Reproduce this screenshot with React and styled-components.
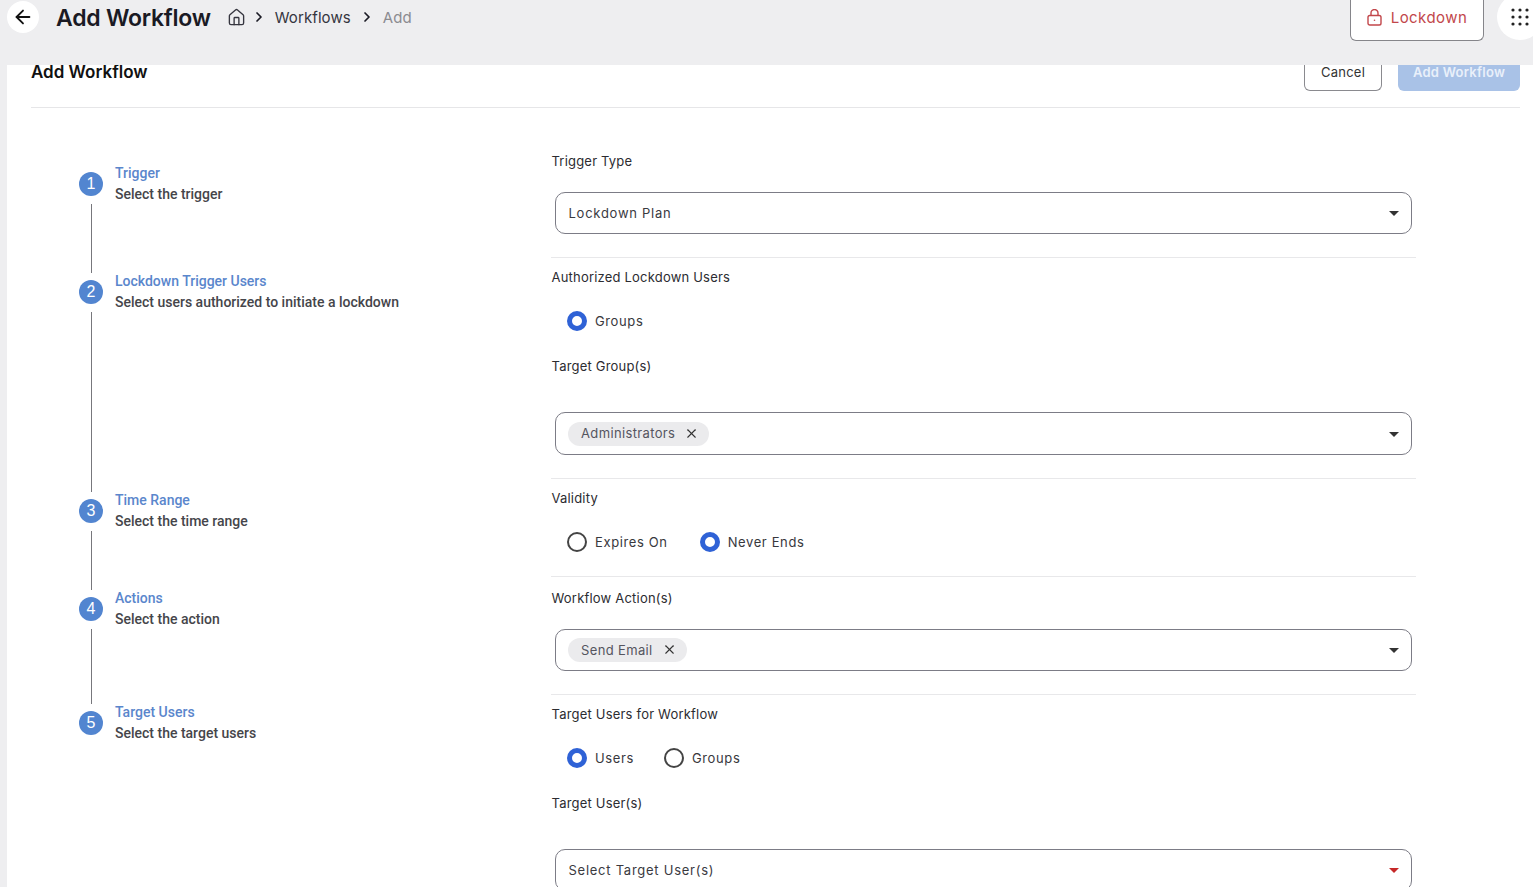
import React from 'react';
import styled, { createGlobalStyle } from 'styled-components';
import { Home, ArrowLeft, ChevronRight, X } from 'lucide-react';

const Global = createGlobalStyle`
  html, body { margin: 0; padding: 0; height: 887px; overflow: hidden; background: #eeeef0; }
  * { box-sizing: border-box; }
  body { font-family: Inter, "Liberation Sans", sans-serif; color: #1f1f24; }
`;

const Page = styled.div`
  width: 1533px; height: 887px; overflow: hidden; display: flex; flex-direction: column;
`;
const Header = styled.header`
  height: 65px; flex: none; display: flex; align-items: flex-start; padding-left: 7px; background: #eeeef0; position: relative;
`;
const BackBtn = styled.div`
  width: 32px; height: 32px; margin-top: 1px; border-radius: 50%; background: #fff; display: flex; align-items: center; justify-content: center; color: #111;
`;
const Title = styled.h1`
  margin: 3px 0 0 17px; font-size: 23px; line-height: 30px; font-weight: 600; letter-spacing: -.25px; color: #1a1a24; white-space: nowrap;
`;
const Crumbs = styled.nav`
  display: flex; align-items: center; height: 20px; margin: 7px 0 0 16px; font-size: 15px; letter-spacing: .1px; color: #35353f;
`;
const Crumb = styled.span`
  color: ${p => p.$muted ? '#8b8b90' : '#35353f'};
  margin-left: ${p => p.$ml}px;
`;
const CrumbSep = styled(ChevronRight)`
  margin-left: ${p => p.$ml}px;
  color: #1a1a24;
`;
const Right = styled.div`
  position: absolute; right: 0; top: 0; display: flex; align-items: flex-start;
`;
const LockBtn = styled.div`
  width: 134px; height: 41px; border: 1px solid #85858a; border-top: 0; border-radius: 0 0 6px 6px; background: #fff;
  display: flex; align-items: center; justify-content: center; gap: 9px; color: #c2474b; font-size: 15px; letter-spacing: .45px; padding-bottom: 5px;
`;
const AppsBtn = styled.div`
  width: 46px; height: 46px; margin: -6px -10px 0 13px; border-radius: 50%; background: #fff; display: flex; align-items: center; padding-left: 14px;
`;
const Card = styled.main`
  flex: 1; margin-left: 7px; background: #fff; padding: 0 13px 0 24px; min-height: 0;
`;
const CardHead = styled.div`
  height: 43px; border-bottom: 1px solid #e6e6e8; display: flex; align-items: flex-start; justify-content: space-between;
`;
const CardTitle = styled.h2`
  margin: 0; font-size: 17px; line-height: 14px; font-weight: 600; color: #111;
`;
const Actions = styled.div`
  display: flex; gap: 16px;
`;
const Btn = styled.div`
  height: 26px; padding-bottom: 12px; border-radius: 0 0 6px 6px; font-size: 13px; letter-spacing: .25px; display: flex; align-items: center; justify-content: center;
  width: ${p => p.$w}px;
  ${p => p.$primary ? 'background:#a9c2e7;color:#e9f0fa;font-weight:600;' : 'background:#fff;border:1px solid #8a8a8f;border-top:0;color:#333;'}
`;
const Body = styled.div`
  display: flex; align-items: flex-start;
`;
const Steps = styled.ol`
  list-style: none; margin: 0; padding: 57px 0 0 48px; width: 520px; flex: none;
`;
const Step = styled.li`
  display: flex; gap: 12px; height: ${p => p.$h}px;
`;
const Track = styled.div`
  width: 24px; flex: none; display: flex; flex-direction: column; align-items: center; padding-top: 7px;
`;
const Dot = styled.div`
  width: 24px; height: 24px; flex: none; border-radius: 50%; background: #5285d0; color: #fff; font-size: 16px; display: flex; align-items: center; justify-content: center; font-family: "Liberation Sans", sans-serif;
`;
const Line = styled.div`
  width: 1px; flex: 1; margin-top: 8px; background: #77777c;
`;
const StepText = styled.div`
  font-family: Roboto, sans-serif; font-size: 14px; line-height: 21px; font-weight: 500; margin-top: -2px;
`;
const StepName = styled.div`color: #5a86cc;`;
const StepDesc = styled.div`color: #45454a;`;
const Form = styled.div`
  width: 865px; flex: none;
`;
const Section = styled.section`
  border-bottom: ${p => p.$last ? '0' : '1px solid #e8e8ea'};
  height: ${p => p.$h}px; padding-top: ${p => p.$pt}px;
`;
const Label = styled.div`
  font-size: 13px; line-height: 20px; letter-spacing: .2px; padding-left: .5px; color: #2c2c31; margin-top: ${p => p.$mt || 0}px;
`;
const Select = styled.div`
  width: 857px; height: ${p => p.$h || 42}px; margin: ${p => p.$mt}px 0 0 4px; border: 1px solid #7c7c86; border-radius: 10px;
  display: flex; align-items: center; padding: 0 12.5px; position: relative; font-size: 13px; letter-spacing: .74px; color: #3a3a3f;
`;
const Caret = styled.i`
  position: absolute; right: 12px; top: 50%; margin-top: -2px; border: 5px solid transparent; border-top-color: ${p => p.$red ? '#c62828' : '#333'}; border-bottom: 0;
`;
const Chip = styled.span`
  height: 24px; border-radius: 12px; background: #ebebed; margin-left: -.5px; padding: 0 10px 1px 13px; display: inline-flex; align-items: center; gap: 9px; color: #55555f; font-size: 13px; letter-spacing: .36px;
`;
const Radios = styled.div`
  display: flex; gap: ${p => p.$gap || 32}px; margin: ${p => p.$mt}px 0 0 16px;
`;
const Radio = styled.label`
  display: flex; align-items: center; gap: 8px; font-size: 13px; letter-spacing: .62px; color: #38383d; height: 22px;
`;
const Circle = styled.span`
  width: 20px; height: 20px; border-radius: 50%; background: #fff;
  border: ${p => p.$on ? '5.5px solid #2f62d6' : '2px solid #444'};
`;

const Apps = () => (
  <svg width="18" height="18" viewBox="0 0 18 18" fill="#222">
    {[2, 9, 16].flatMap(y => [2, 9, 16].map(x => <circle key={`${x}${y}`} cx={x} cy={y} r="1.6" />))}
  </svg>
);

const LockIcon = () => (
  <svg width="15" height="17" viewBox="0 0 15 17" fill="none" stroke="currentColor" strokeWidth="1.4">
    <rect x="1" y="6.5" width="13" height="9.5" rx="1.8" />
    <path d="M4 6.5V4a3.5 3.5 0 0 1 7 0v2.5" />
    <circle cx="7.5" cy="11.2" r=".8" fill="currentColor" stroke="none" />
  </svg>
);

const steps = [
  ['1', 'Trigger', 'Select the trigger', 108],
  ['2', 'Lockdown Trigger Users', 'Select users authorized to initiate a lockdown', 219],
  ['3', 'Time Range', 'Select the time range', 98],
  ['4', 'Actions', 'Select the action', 114],
  ['5', 'Target Users', 'Select the target users', 60],
];

export default function App() {
  return (
    <Page>
      <Global />
      <Header>
        <BackBtn><ArrowLeft size={22} strokeWidth={2} /></BackBtn>
        <Title>Add Workflow</Title>
        <Crumbs>
          <Home size={19} strokeWidth={1.7} />
          <CrumbSep size={16} strokeWidth={2.6} $ml={5} />
          <Crumb $ml={8}>Workflows</Crumb>
          <CrumbSep size={16} strokeWidth={2.6} $ml={8} />
          <Crumb $ml={8} $muted>Add</Crumb>
        </Crumbs>
        <Right>
          <LockBtn><LockIcon />Lockdown</LockBtn>
          <AppsBtn><Apps /></AppsBtn>
        </Right>
      </Header>
      <Card>
        <CardHead>
          <CardTitle>Add Workflow</CardTitle>
          <Actions>
            <Btn $w={78}>Cancel</Btn>
            <Btn $w={122} $primary>Add Workflow</Btn>
          </Actions>
        </CardHead>
        <Body>
          <Steps>
            {steps.map(([n, name, desc, h], i) => (
              <Step key={n} $h={h}>
                <Track><Dot>{n}</Dot>{i < 4 && <Line />}</Track>
                <StepText><StepName>{name}</StepName><StepDesc>{desc}</StepDesc></StepText>
              </Step>
            ))}
          </Steps>
          <Form>
            <Section $h={150} $pt={43}>
              <Label>Trigger Type</Label>
              <Select $mt={21}>Lockdown Plan<Caret /></Select>
            </Section>
            <Section $h={221} $pt={9}>
              <Label>Authorized Lockdown Users</Label>
              <Radios $mt={23}><Radio><Circle $on />Groups</Radio></Radios>
              <Label $mt={24}>Target Group(s)</Label>
              <Select $mt={36} $h={43}><Chip>Administrators<X size={15} strokeWidth={1.7} color="#333" /></Chip><Caret /></Select>
            </Section>
            <Section $h={98} $pt={9}>
              <Label>Validity</Label>
              <Radios $mt={23}>
                <Radio><Circle />Expires On</Radio>
                <Radio><Circle $on />Never Ends</Radio>
              </Radios>
            </Section>
            <Section $h={118} $pt={11}>
              <Label>Workflow Action(s)</Label>
              <Select $mt={21}><Chip>Send Email<X size={15} strokeWidth={1.7} color="#333" /></Chip><Caret /></Select>
            </Section>
            <Section $h={200} $pt={9} $last>
              <Label>Target Users for Workflow</Label>
              <Radios $mt={23} $gap={30}>
                <Radio><Circle $on />Users</Radio>
                <Radio><Circle />Groups</Radio>
              </Radios>
              <Label $mt={24}>Target User(s)</Label>
              <Select $mt={36}>Select Target User(s)<Caret $red /></Select>
            </Section>
          </Form>
        </Body>
      </Card>
    </Page>
  );
}
